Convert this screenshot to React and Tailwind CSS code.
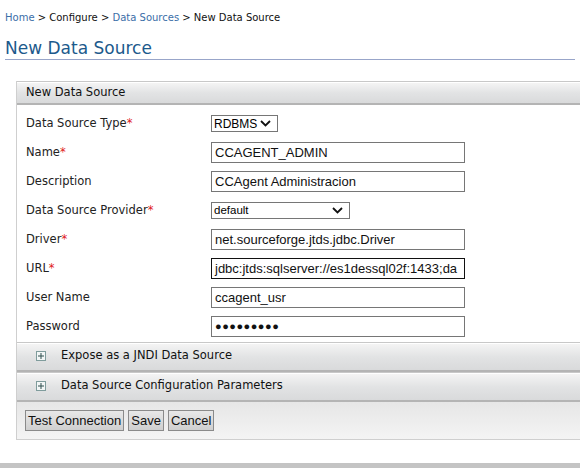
const fields = [
  { label: 'Data Source Type', req: true, kind: 'select', value: 'RDBMS', w: 'w-[67px]' },
  { label: 'Name', req: true, kind: 'text', value: 'CCAGENT_ADMIN' },
  { label: 'Description', kind: 'text', value: 'CCAgent Administracion' },
  { label: 'Data Source Provider', req: true, kind: 'select', value: 'default', w: 'w-[139px]', small: true },
  { label: 'Driver', req: true, kind: 'text', value: 'net.sourceforge.jtds.jdbc.Driver' },
  { label: 'URL', req: true, kind: 'text', value: 'jdbc:jtds:sqlserver://es1dessql02f:1433;da', focus: true },
  { label: 'User Name', kind: 'text', value: 'ccagent_usr' },
  { label: 'Password', kind: 'password', value: '●●●●●●●●●' },
];

function Chevron() {
  return (
    <svg width="11" height="7" viewBox="0 0 11 7" className="shrink-0">
      <path d="M1 1 L5.5 5.5 L10 1" fill="none" stroke="#111" strokeWidth="1.8" />
    </svg>
  );
}

function Field({ f }) {
  if (f.kind === 'select') {
    return (
      <div className={`${f.w} h-[17px] border border-[#767676] bg-white flex items-center justify-between pl-[2px] pr-[6px] font-['Liberation_Sans',Arial,sans-serif] ${f.small ? 'text-[11.5px]' : 'text-[12px]'} text-black`}>
        <span>{f.value}</span>
        <Chevron />
      </div>
    );
  }
  return (
    <div className={`w-[254px] h-[21px] border ${f.focus ? 'border-[#111]' : 'border-[#767676]'} bg-white flex items-center px-[3px] overflow-hidden whitespace-nowrap font-['Liberation_Sans',Arial,sans-serif] ${f.kind === 'password' ? 'text-[11px] tracking-[0.5px]' : 'text-[13px]'} text-[#111]`}>
      {f.value}
    </div>
  );
}

function SectionBar({ children }) {
  return (
    <div className="h-[30px] border-t border-[#c8c8c8]">
      <div className="h-full pb-[3px] border-t border-white border-b-2 border-b-[#b4b4b4] bg-gradient-to-b from-[#f4f4f4] via-[#e2e3e4] to-[#d9dadb] flex items-center">
        {children}
      </div>
    </div>
  );
}

function PlusBox() {
  return (
    <span className="w-[10px] h-[10px] border border-[#7f9c9c] bg-[#f2f6f6] flex items-center justify-center">
      <svg width="6" height="6" viewBox="0 0 6 6"><path d="M3 0 V6 M0 3 H6" stroke="#2f4f4f" strokeWidth="1" /></svg>
    </span>
  );
}

export default function App() {
  return (
    <div className="w-[580px] h-[468px] overflow-hidden bg-white relative font-['DejaVu_Sans',Verdana,sans-serif]">
      <div className="px-[5px] pt-[10px] text-[10px] leading-[15px] text-[#111]">
        <span className="text-[#3b6ea8]">Home</span> &gt; Configure &gt; <span className="text-[#3b6ea8]">Data Sources</span> &gt; New Data Source
      </div>
      <div className="mx-[5px] mt-[12px] border-b border-[#98a5c9] text-[17px] text-[#1c5a8c] leading-[22px]">
        New Data Source
      </div>

      <div className="ml-[16px] mt-[21px] w-[600px] border-l border-[#cfcfcf] border-b">
        <div className="h-[24px] border-t border-[#c8c8c8]">
          <div className="h-full border-t border-white border-b-2 border-b-[#b4b4b4] bg-gradient-to-b from-[#f4f4f4] via-[#e2e3e4] to-[#d9dadb] flex items-center pl-[9px] text-[11.5px] text-[#111]">
            New Data Source
          </div>
        </div>

        <div className="pt-[4px] pb-[1px]">
          {fields.map((f) => (
            <div key={f.label} className="h-[29px] flex items-center pl-[9px] text-[11.5px] text-[#222]">
              <div className="w-[185px]">
                {f.label}
                {f.req && <span className="text-[#e0201a]">*</span>}
              </div>
              <Field f={f} />
            </div>
          ))}
        </div>

        <SectionBar>
          <div className="pl-[19px] flex items-center gap-[15px] text-[11.5px] text-[#111]">
            <PlusBox />
            Expose as a JNDI Data Source
          </div>
        </SectionBar>
        <SectionBar>
          <div className="pl-[19px] flex items-center gap-[15px] text-[11.5px] text-[#111]">
            <PlusBox />
            Data Source Configuration Parameters
          </div>
        </SectionBar>

        <div className="h-[37px] bg-gradient-to-b from-[#e6e6e6] to-[#f4f4f4] flex items-center pl-[8px] gap-[4px] font-['Liberation_Sans',Arial,sans-serif] text-[13px] text-[#111]">
          {['Test Connection', 'Save', 'Cancel'].map((b) => (
            <button key={b} className="h-[21px] px-[2px] border border-[#8a8a8a] bg-gradient-to-b from-[#e8e8e8] to-[#cfcfcf] leading-none">
              {b}
            </button>
          ))}
        </div>
      </div>

      <div className="absolute left-0 right-0 bottom-0 h-[5px] bg-[#c4c4c4]" />
    </div>
  );
}
